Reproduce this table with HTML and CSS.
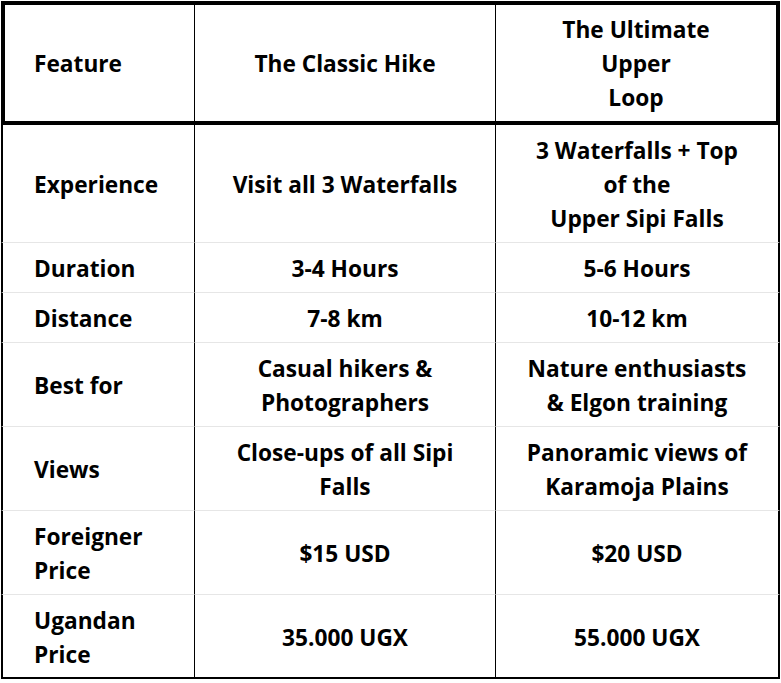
FILE: index.html
```html
<!DOCTYPE html>
<html lang="en">
<head>
<meta charset="utf-8">
<title>Sipi Falls Hikes</title>
<link rel="stylesheet" href="styles.css">
</head>
<body>
<table class="compare">
  <colgroup>
    <col class="c1">
    <col class="c2">
    <col class="c3">
  </colgroup>
  <thead>
    <tr>
      <th>Feature</th>
      <th>The Classic Hike</th>
      <th>The Ultimate<br>Upper<br>Loop</th>
    </tr>
  </thead>
  <tbody>
    <tr>
      <td>Experience</td>
      <td>Visit all 3 Waterfalls</td>
      <td>3 Waterfalls + Top<br>of the<br>Upper Sipi Falls</td>
    </tr>
    <tr>
      <td>Duration</td>
      <td>3-4 Hours</td>
      <td>5-6 Hours</td>
    </tr>
    <tr>
      <td>Distance</td>
      <td>7-8 km</td>
      <td>10-12 km</td>
    </tr>
    <tr>
      <td>Best for</td>
      <td>Casual hikers &amp;<br>Photographers</td>
      <td>Nature enthusiasts<br>&amp; Elgon training</td>
    </tr>
    <tr>
      <td>Views</td>
      <td>Close-ups of all Sipi<br>Falls</td>
      <td>Panoramic views of<br>Karamoja Plains</td>
    </tr>
    <tr>
      <td>Foreigner<br>Price</td>
      <td>$15 USD</td>
      <td>$20 USD</td>
    </tr>
    <tr>
      <td>Ugandan<br>Price</td>
      <td>35.000 UGX</td>
      <td>55.000 UGX</td>
    </tr>
  </tbody>
</table>
</body>
</html>
```

FILE: styles.css
```css
html, body {
  margin: 0;
  padding: 0;
  background: #ffffff;
}

body {
  padding: 1px 0 0 1px;
  font-family: "Open Sans", "DejaVu Sans", sans-serif;
  font-weight: 700;
  font-size: 22.7px;
  line-height: 34px;
  color: #000000;
}

.compare {
  border-collapse: separate;
  border-spacing: 0;
  table-layout: fixed;
  width: 779px;
}

.c1 { width: 193px; }
.c2 { width: 301px; }
.c3 { width: 285px; }

.compare th,
.compare td {
  text-align: center;
  vertical-align: middle;
  font-weight: 700;
  padding: 0 20px;
}

.compare th {
  border-top: 4px solid #000;
  border-bottom: 4px solid #000;
  padding-top: 8px;
  padding-bottom: 6px;
}

.compare th + th {
  border-left: 1px solid #000;
}

.compare th:first-child {
  border-left: 4px solid #000;
  text-align: left;
  padding-left: 29px;
}

.compare th:last-child {
  border-right: 4px solid #000;
}

.compare td {
  padding-top: 9px;
  padding-bottom: 6px;
  border-bottom: 1px solid #e6e6e6;
}

.compare td + td {
  border-left: 1px solid #000;
}

.compare td:first-child {
  border-left: 2px solid #000;
  text-align: left;
  padding-left: 31px;
}

.compare td:last-child {
  border-right: 2px solid #000;
}

.compare tbody tr:last-child td {
  border-bottom: 2px solid #000;
  padding-bottom: 5px;
}
```
